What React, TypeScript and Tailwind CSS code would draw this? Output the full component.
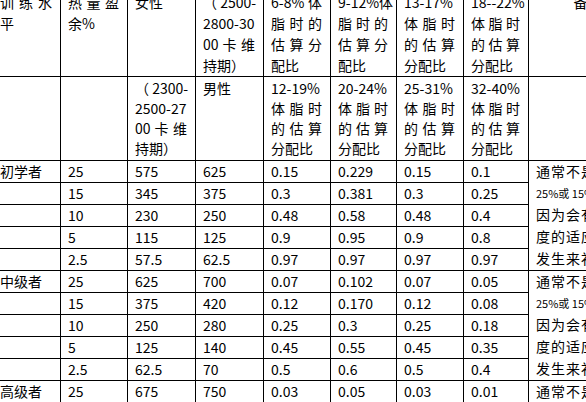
const FONT = "font-['Noto_Sans_CJK_SC','Liberation_Sans',sans-serif]";

type Group = { label: string; rows: string[][]; remark: string[] };

const groups: Group[] = [
  {
    label: "初学者",
    rows: [
      ["25", "575", "625", "0.15", "0.229", "0.15", "0.1"],
      ["15", "345", "375", "0.3", "0.381", "0.3", "0.25"],
      ["10", "230", "250", "0.48", "0.58", "0.48", "0.4"],
      ["5", "115", "125", "0.9", "0.95", "0.9", "0.8"],
      ["2.5", "57.5", "62.5", "0.97", "0.97", "0.97", "0.97"],
    ],
    remark: ["通常不是选择", "25%或 15%的热量盈余，", "因为会有一定程", "度的适应性改变", "发生来补偿。"],
  },
  {
    label: "中级者",
    rows: [
      ["25", "625", "700", "0.07", "0.102", "0.07", "0.05"],
      ["15", "375", "420", "0.12", "0.170", "0.12", "0.08"],
      ["10", "250", "280", "0.25", "0.3", "0.25", "0.18"],
      ["5", "125", "140", "0.45", "0.55", "0.45", "0.35"],
      ["2.5", "62.5", "70", "0.5", "0.6", "0.5", "0.4"],
    ],
    remark: ["通常不是选择", "25%或 15%的热量盈余，", "因为会有一定程", "度的适应性改变", "发生来补偿。"],
  },
  {
    label: "高级者",
    rows: [
      ["25", "675", "750", "0.03", "0.05", "0.03", "0.01"],
      ["15", "405", "450", "0.06", "0.1", "0.06", "0.03"],
    ],
    remark: ["通常不是选择", "25%或 15%的热量盈余，"],
  },
];

const widths = ["w-[68px]", "w-[67px]", "w-[68px]", "w-[68px]", "w-[67px]", "w-[66px]", "w-[67px]", "w-[65px]", "w-[106px]"];

function Lines({ lines }: { lines: string[] }) {
  return (
    <>
      {lines.map((l, i) => (
        <div key={i} className={i < lines.length - 1 ? "whitespace-nowrap [text-align-last:justify]" : "whitespace-nowrap"}>
          {l}
        </div>
      ))}
    </>
  );
}

const head1: string[][] = [
  ["训练水", "平"],
  ["热量盈", "余%"],
  ["女性"],
  ["（ 2500-", "2800-30", "00 卡 维", "持期）"],
  ["6-8% 体", "脂时的", "估算分", "配比"],
  ["9-12%体", "脂时的", "估算分", "配比"],
  ["13-17%", "体脂时", "的估算", "分配比"],
  ["18--22%", "体脂时", "的估算", "分配比"],
];

const head2: string[][] = [
  [],
  [],
  ["（ 2300-", "2500-27", "00 卡 维", "持期）"],
  ["男性"],
  ["12-19%", "体脂时", "的估算", "分配比"],
  ["20-24%", "体脂时", "的估算", "分配比"],
  ["25-31%", "体脂时", "的估算", "分配比"],
  ["32-40%", "体脂时", "的估算", "分配比"],
];

export default function App() {
  const td = "border border-black pl-[7px] pr-[8px]";
  return (
    <div className={`w-[586px] h-[402px] overflow-hidden bg-white text-black text-[14px] ${FONT}`}>
      <table className="table-fixed border-collapse w-[642px] -ml-[8px] -mt-[9px]">
        <colgroup>
          {widths.map((w, i) => (
            <col key={i} className={w} />
          ))}
        </colgroup>
        <tbody>
          <tr>
            {head1.map((lines, i) => (
              <td key={i} className={`${td} text-left align-top leading-[21px] pt-0 pb-0`}>
                <Lines lines={lines} />
              </td>
            ))}
            <td className={`${td} text-center align-top leading-[21px] pl-[20px]`}>备注</td>
          </tr>
          <tr>
            {head2.map((lines, i) => (
              <td key={i} className={`${td} text-left align-top leading-[20px] pt-[1px] pb-[2px]`}>
                <Lines lines={lines} />
              </td>
            ))}
            <td className={td}></td>
          </tr>
          {groups.map((g) =>
            g.rows.map((r, ri) => (
              <tr key={g.label + ri} className="h-[22px]">
                <td className={`${td} text-left py-0 leading-[21px] whitespace-nowrap`}>{ri === 0 ? g.label : ""}</td>
                {r.map((v, vi) => (
                  <td key={vi} className={`${td} text-left py-0 leading-[21px] whitespace-nowrap`}>
                    {v}
                  </td>
                ))}
                {ri === 0 && (
                  <td rowSpan={g.rows.length} className={`${td} text-left align-top py-0`}>
                    {g.remark.map((l, li) => (
                      <div
                        key={li}
                        className={
                          li === 1
                            ? "whitespace-nowrap text-[11px] leading-[21.7px]"
                            : "whitespace-nowrap tracking-[1px] leading-[21.7px]"
                        }
                      >
                        {l}
                      </div>
                    ))}
                  </td>
                )}
              </tr>
            ))
          )}
        </tbody>
      </table>
    </div>
  );
}
